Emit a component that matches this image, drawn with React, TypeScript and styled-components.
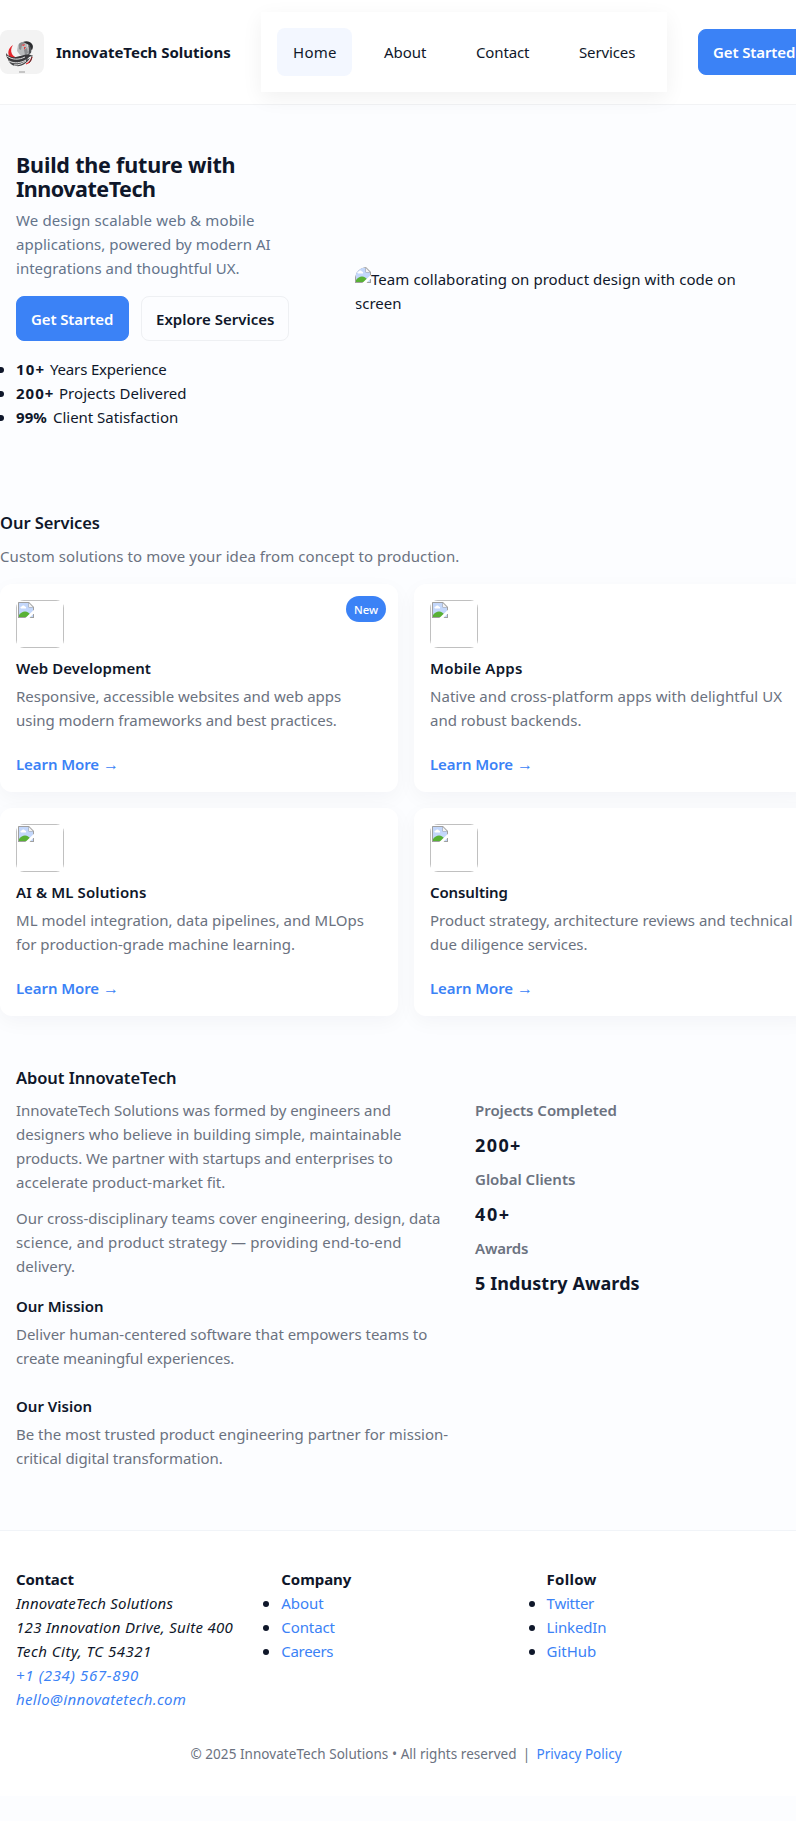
import React from 'react';
import styled, { createGlobalStyle, css } from 'styled-components';

const ink = '#0f172a';
const muted = '#6b7280';
const blue = '#3b82f6';

const GlobalStyle = createGlobalStyle`
  * { box-sizing: border-box; }
  html { overflow: hidden; }
  body {
    margin: 0;
    background: #fcfdff;
    color: ${ink};
    font: 400 15px/24px "Noto Sans", "Open Sans", sans-serif;
    overflow: hidden;
  }
  h1, h2, h3, h4, p, ul, dl, dd, address { margin: 0; padding: 0; }
  ul { list-style: none; }
  a { color: ${blue}; text-decoration: none; }
`;

/* A line of copy: track is its letter spacing in pixels. */
const Line = styled.span<{ $track?: number }>`
  display: block;
  white-space: nowrap;
  letter-spacing: ${({ $track = 0 }) => $track}px;
`;

const Page = styled.div`
  width: 812px;
`;

const Header = styled.header`
  display: flex;
  align-items: center;
  height: 105px;
  background: #fff;
  border-bottom: 1px solid #f2f3f5;
`;

const Brand = styled.div`
  display: flex;
  align-items: center;
  gap: 12px;
  width: 261px;
  font-weight: 700;
`;

const Logo = styled.svg`
  flex: none;
  width: 44px;
  height: 44px;
  border-radius: 8px;
`;

const Nav = styled.nav`
  display: flex;
  gap: 16px;
  width: 406px;
  height: 80px;
  padding: 16px;
  background: #fff;
  box-shadow: 0 6px 20px rgba(2, 6, 23, 0.06);
`;

const NavLink = styled.a<{ $active?: boolean; $width: number }>`
  width: ${({ $width }) => $width}px;
  padding: 12px 0 12px 16px;
  border-radius: 8px;
  color: ${ink};
  ${({ $active }) => $active && css`background: #f3f7ff;`}
`;

const Button = styled.a<{ $outline?: boolean }>`
  display: block;
  height: 46px;
  width: ${({ $outline }) => ($outline ? 148 : 113)}px;
  padding: 10px 14px;
  border: 1px solid ${({ $outline }) => ($outline ? '#eef0f3' : blue)};
  border-radius: 8px;
  background: ${({ $outline }) => ($outline ? 'transparent' : blue)};
  color: ${({ $outline }) => ($outline ? ink : '#fff')};
  font-weight: 600;
`;

const HeaderAction = styled.div`
  margin-left: 31px;
`;

const Hero = styled.section`
  display: grid;
  grid-template-columns: 307px 441px;
  gap: 32px;
  align-items: center;
  padding: 48px 16px 0;
`;

const HeroTitle = styled.h1`
  font-size: 21.5px;
  line-height: 24px;
  font-weight: 700;
`;

const Lead = styled.p`
  margin-top: 7px;
  color: #64748b;
`;

const Actions = styled.div`
  display: flex;
  gap: 12px;
  height: 45px;
  margin: 16px 0;

  ${Button} { height: 45px; }
`;

const Bullet = styled.li`
  white-space: nowrap;

  &::before {
    content: "";
    display: inline-block;
    width: 6px;
    height: 6px;
    margin: 0 12px 0 -18px;
    border-radius: 50%;
    background: ${ink};
    vertical-align: 2px;
  }
`;

const Strong = styled.strong<{ $width: number; $track: number }>`
  display: inline-block;
  width: ${({ $width }) => $width}px;
  font-weight: 700;
  letter-spacing: ${({ $track }) => $track}px;
`;

const Tracked = styled.span<{ $track: number }>`
  letter-spacing: ${({ $track }) => $track}px;
`;

const Figure = styled.div`
  overflow: hidden;
  border-radius: 12px;
`;

const IconSvg = styled.svg`
  display: block;
  flex: none;
  width: 16px;
  height: 16px;
`;

const FigureRow = styled.div`
  display: flex;
`;

const Services = styled.section`
  padding-top: 80px;
`;

const SectionTitle = styled.h2`
  font-size: 16.5px;
  line-height: 27px;
  font-weight: 600;
`;

const SectionNote = styled.p`
  margin: 8px 0 16px;
  color: ${muted};
`;

const Grid = styled.div`
  display: grid;
  grid-template-columns: 1fr 1fr;
  gap: 16px;
`;

const Card = styled.article`
  position: relative;
  height: 208px;
  padding: 16px;
  border-radius: 12px;
  background: #fff;
  box-shadow: 0 6px 20px rgba(15, 23, 42, 0.04);
`;

const Badge = styled.span`
  position: absolute;
  top: 12px;
  right: 12px;
  width: 40px;
  height: 26px;
  border-radius: 13px;
  background: ${blue};
  color: #fff;
  font-size: 11.25px;
  font-weight: 500;
  line-height: 27px;
  text-align: center;
`;

const Thumb = styled.div`
  width: 48px;
  height: 48px;
  overflow: hidden;
  border-radius: 8px;
`;

const ThumbFrame = styled.div`
  height: 48px;
  padding: 1px;
  border: 1px solid #c0c0c0;
`;

const CardTitle = styled.h3`
  margin: 8px 0 4px;
  font-size: 15px;
  font-weight: 600;
`;

const Muted = styled.p`
  color: ${muted};
`;

const More = styled.a`
  display: flex;
  margin-top: 20px;
  font-weight: 600;
`;

const Arrow = styled.span`
  margin-left: 4px;
  font-size: 16px;
  font-weight: 400;
`;

const About = styled.section`
  display: grid;
  grid-template-columns: 435px 1fr;
  gap: 24px;
  padding: 48px 16px 60px;
`;

const Copy = styled.div`
  display: flex;
  flex-direction: column;
`;

const AboutTitle = styled(SectionTitle)`
  margin-bottom: 7px;
`;

const Paragraph = styled(Muted)`
  margin-bottom: 12px;
`;

const Statement = styled.div`
  padding-top: 4px;
  margin-bottom: 20px;

  & + & { margin-bottom: 0; }
`;

const StatementTitle = styled.h3`
  margin-bottom: 4px;
  font-size: 15px;
  font-weight: 600;
`;

const Stats = styled.dl`
  padding-top: 34px;
`;

const StatLabel = styled.dt`
  color: ${muted};
  font-weight: 600;
`;

const StatValue = styled.dd`
  padding: 10px 0 8px;
  font-size: 18px;
  line-height: 27px;
  font-weight: 700;
`;

const Footer = styled.footer`
  height: 266px;
  padding: 36px 16px 0;
  border-top: 1px solid #f1f4f8;
  background: #fff;
`;

const FooterColumns = styled.div`
  display: grid;
  grid-template-columns: repeat(3, 233.3px);
  gap: 32px;
`;

const FooterTitle = styled.h4`
  font-size: 15px;
  font-weight: 700;
`;

const Address = styled.address`
  font-style: italic;
`;

const Legal = styled.p`
  display: flex;
  justify-content: center;
  margin-top: 31px;
  color: ${muted};
  font-size: 13.5px;
`;

const Divider = styled.span`
  width: 20px;
  text-align: center;
`;

type Copyline = [string, number];

const Lines = ({ of }: { of: Copyline[] }) => (
  <>
    {of.map(([text, track]) => (
      <Line key={text} $track={track}>{text}</Line>
    ))}
  </>
);

const MissingImage = () => (
  <IconSvg viewBox="0 0 16 16">
    <path d="M0 0h11l5 5v11H0z" fill="#a0a0a0" />
    <path d="M1 1h9.500v4.500H15V15H1z" fill="#c3d7fb" />
    <path d="M11 1.300 14.700 5H11z" fill="#f4f4f4" />
    <path d="M2.500 6c-.4-1 .5-1.800 1.400-1.500.5-1.600 2.700-1.400 3 .1 1.300 0 1.600 1.400.9 1.900H3.200z" fill="#fff" />
    <path d="M1 15v-2c1.800-2 3.600-3.500 6-3.500 2.500 0 4 1.300 5.500 3.500V15z" fill="#58b135" />
    <path d="M7.300 16 16 7.800v3.400L11.500 16z" fill="#fff" />
  </IconSvg>
);

const BrandMark = () => (
  <Logo viewBox="0 0 44 44">
    <rect width="44" height="44" fill="#f3f3f3" />
    <path d="M18 15c1-2 3-3 5-3l4 2 2 8-3 4-6-1-3-4z" fill="#b9bbbc" />
    <path d="M19 14c2-2 4-2 6-1l-3 2-1 5-2-1zM24 20l3-2 1 5-3 2z" fill="#8b8d8f" />
    <path d="M23 12c3-1.500 7-1 9 2 1.500 2 1 4 0 6l-2-1c.5-3-1-4-3-5z" fill="#2c2d2f" />
    <path d="M28 15c3 1 4 4 3 8l-3 2c1-3 1-6 0-10z" fill="#505255" />
    <path d="M21 15l4-1-1 2zM24 17l2 0-2 3z" fill="#e33b3f" />
    <path d="M13 15c-5 3-6 9-3 12 3 3 8 3 13 1-4 0-9 0-11-4-1.500-3-1-6 1-9z" fill="#e5252b" />
    <path d="M6 23c2 3 6 5 10 4l8-2c3-1 6-1 8 1-3 0-4 3-7 5-7 4-19 2-19-8z" fill="#3a3a3c" />
    <path d="M8 29c4 3 10 4 16 2l6-3c-3 5-8 9-14 8-4 0-7-3-8-7z" fill="#48494b" />
    <path d="M7 26c5 4 12 4 18 1M9 31c5 3 12 2 17-1M14 35c5 0 8-1 12-4" fill="none" stroke="#f3f3f3" strokeWidth=".9" />
    <path d="M26 34c3-1 5-3 6-7" fill="none" stroke="#e5252b" strokeWidth="1.200" />
    <path d="M29 33c2-2 3-5 3-8" fill="none" stroke="#303133" strokeWidth=".8" />
    <path d="M19 42h6" stroke="#999" />
  </Logo>
);

const nav = [
  { label: 'Home', width: 75, track: 0.3 },
  { label: 'About', width: 76, track: -0.04 },
  { label: 'Contact', width: 87, track: -0.14 },
  { label: 'Services', width: 88, track: -0.13 },
];

const services: { title: Copyline; text: Copyline[]; isNew?: boolean }[] = [
  {
    title: ['Web Development', 0.05],
    text: [
      ['Responsive, accessible websites and web apps', -0.026],
      ['using modern frameworks and best practices.', -0.04],
    ],
    isNew: true,
  },
  {
    title: ['Mobile Apps', 0.23],
    text: [
      ['Native and cross-platform apps with delightful UX', 0.04],
      ['and robust backends.', -0.02],
    ],
  },
  {
    title: ['AI & ML Solutions', 0.12],
    text: [
      ['ML model integration, data pipelines, and MLOps', 0.023],
      ['for production-grade machine learning.', 0.006],
    ],
  },
  {
    title: ['Consulting', -0.112],
    text: [
      ['Product strategy, architecture reviews and technical', -0.01],
      ['due diligence services.', -0.04],
    ],
  },
];

const facts: { value: string; width: number; lead: number; label: string; track: number }[] = [
  { value: '10+', width: 34, lead: 1.2, label: 'Years Experience', track: -0.17 },
  { value: '200+', width: 43, lead: 1, label: 'Projects Delivered', track: 0.04 },
  { value: '99%', width: 37, lead: 0.1, label: 'Client Satisfaction', track: -0.029 },
];

const stats: { label: Copyline; value: Copyline }[] = [
  { label: ['Projects Completed', -0.03], value: ['200+', 1.4] },
  { label: ['Global Clients', -0.015], value: ['40+', 1.6] },
  { label: ['Awards', -0.18], value: ['5 Industry Awards', 0.08] },
];

const footerLinks: { title: Copyline; links: Copyline[] }[] = [
  { title: ['Company', -0.058], links: [['About', -0.04], ['Contact', -0.1], ['Careers', -0.318]] },
  { title: ['Follow', 0.275], links: [['Twitter', -0.248], ['LinkedIn', -0.16], ['GitHub', -0.05]] },
];

export default function App() {
  return (
    <Page>
      <GlobalStyle />
      <Header>
        <Brand>
          <BrandMark />
          <Line $track={-0.01}>InnovateTech Solutions</Line>
        </Brand>
        <Nav>
          {nav.map(({ label, width, track }, i) => (
            <NavLink key={label} href="#" $width={width} $active={i === 0}>
              <Line $track={track}>{label}</Line>
            </NavLink>
          ))}
        </Nav>
        <HeaderAction>
          <Button href="#"><Line $track={-0.115}>Get Started</Line></Button>
        </HeaderAction>
      </Header>

      <Hero>
        <div>
          <HeroTitle>
            <Lines of={[['Build the future with', -0.19], ['InnovateTech', -0.5]]} />
          </HeroTitle>
          <Lead>
            <Lines
              of={[
                ['We design scalable web & mobile', 0.133],
                ['applications, powered by modern AI', 0.02],
                ['integrations and thoughtful UX.', 0.02],
              ]}
            />
          </Lead>
          <Actions>
            <Button href="#"><Line $track={-0.115}>Get Started</Line></Button>
            <Button href="#" $outline><Line $track={0.011}>Explore Services</Line></Button>
          </Actions>
          <ul>
            {facts.map(({ value, width, lead, label, track }) => (
              <Bullet key={label}>
                <Strong $width={width} $track={lead}>{value}</Strong>
                <Tracked $track={track}>{label}</Tracked>
              </Bullet>
            ))}
          </ul>
        </div>
        <Figure>
          <FigureRow>
            <MissingImage />
            <Line $track={0.06}>Team collaborating on product design with code on</Line>
          </FigureRow>
          <Line>screen</Line>
        </Figure>
      </Hero>

      <Services>
        <SectionTitle><Line $track={-0.06}>Our Services</Line></SectionTitle>
        <SectionNote>
          <Line $track={0.065}>Custom solutions to move your idea from concept to production.</Line>
        </SectionNote>
        <Grid>
          {services.map(({ title, text, isNew }) => (
            <Card key={title[0]}>
              {isNew && <Badge>New</Badge>}
              <Thumb><ThumbFrame><MissingImage /></ThumbFrame></Thumb>
              <CardTitle><Lines of={[title]} /></CardTitle>
              <Muted><Lines of={text} /></Muted>
              <More href="#"><Line $track={-0.09}>Learn More</Line><Arrow>→</Arrow></More>
            </Card>
          ))}
        </Grid>
      </Services>

      <About>
        <Copy>
          <AboutTitle><Line $track={-0.08}>About InnovateTech</Line></AboutTitle>
          <Paragraph>
            <Lines
              of={[
                ['InnovateTech Solutions was formed by engineers and', -0.034],
                ['designers who believe in building simple, maintainable', -0.018],
                ['products. We partner with startups and enterprises to', -0.044],
                ['accelerate product-market fit.', 0.021],
              ]}
            />
          </Paragraph>
          <Paragraph>
            <Lines
              of={[
                ['Our cross-disciplinary teams cover engineering, design, data', -0.025],
                ['science, and product strategy — providing end-to-end', 0.128],
                ['delivery.', 0.031],
              ]}
            />
          </Paragraph>
          <Statement>
            <StatementTitle><Line $track={-0.026}>Our Mission</Line></StatementTitle>
            <Muted>
              <Lines
                of={[
                  ['Deliver human-centered software that empowers teams to', -0.02],
                  ['create meaningful experiences.', -0.09],
                ]}
              />
            </Muted>
          </Statement>
          <Statement>
            <StatementTitle><Line $track={0.012}>Our Vision</Line></StatementTitle>
            <Muted>
              <Lines
                of={[
                  ['Be the most trusted product engineering partner for mission-', -0.02],
                  ['critical digital transformation.', -0.055],
                ]}
              />
            </Muted>
          </Statement>
        </Copy>
        <Stats>
          {stats.map(({ label, value }) => (
            <React.Fragment key={label[0]}>
              <StatLabel><Lines of={[label]} /></StatLabel>
              <StatValue><Lines of={[value]} /></StatValue>
            </React.Fragment>
          ))}
        </Stats>
      </About>

      <Footer>
        <FooterColumns>
          <div>
            <FooterTitle><Line $track={-0.1}>Contact</Line></FooterTitle>
            <Address>
              <Lines
                of={[
                  ['InnovateTech Solutions', 0.2],
                  ['123 Innovation Drive, Suite 400', 0.3],
                  ['Tech City, TC 54321', 0.494],
                ]}
              />
              <a href="#"><Line $track={0.66}>+1 (234) 567-890</Line></a>
              <a href="#"><Line $track={0.35}>hello@innovatetech.com</Line></a>
            </Address>
          </div>
          {footerLinks.map(({ title, links }) => (
            <div key={title[0]}>
              <FooterTitle><Lines of={[title]} /></FooterTitle>
              <ul>
                {links.map(([label, track]) => (
                  <Bullet key={label}>
                    <a href="#"><Tracked $track={track}>{label}</Tracked></a>
                  </Bullet>
                ))}
              </ul>
            </div>
          ))}
        </FooterColumns>
        <Legal>
          <Line $track={0.05}>© 2025 InnovateTech Solutions • All rights reserved</Line>
          <Divider>|</Divider>
          <a href="#"><Line $track={-0.02}>Privacy Policy</Line></a>
        </Legal>
      </Footer>
    </Page>
  );
}
